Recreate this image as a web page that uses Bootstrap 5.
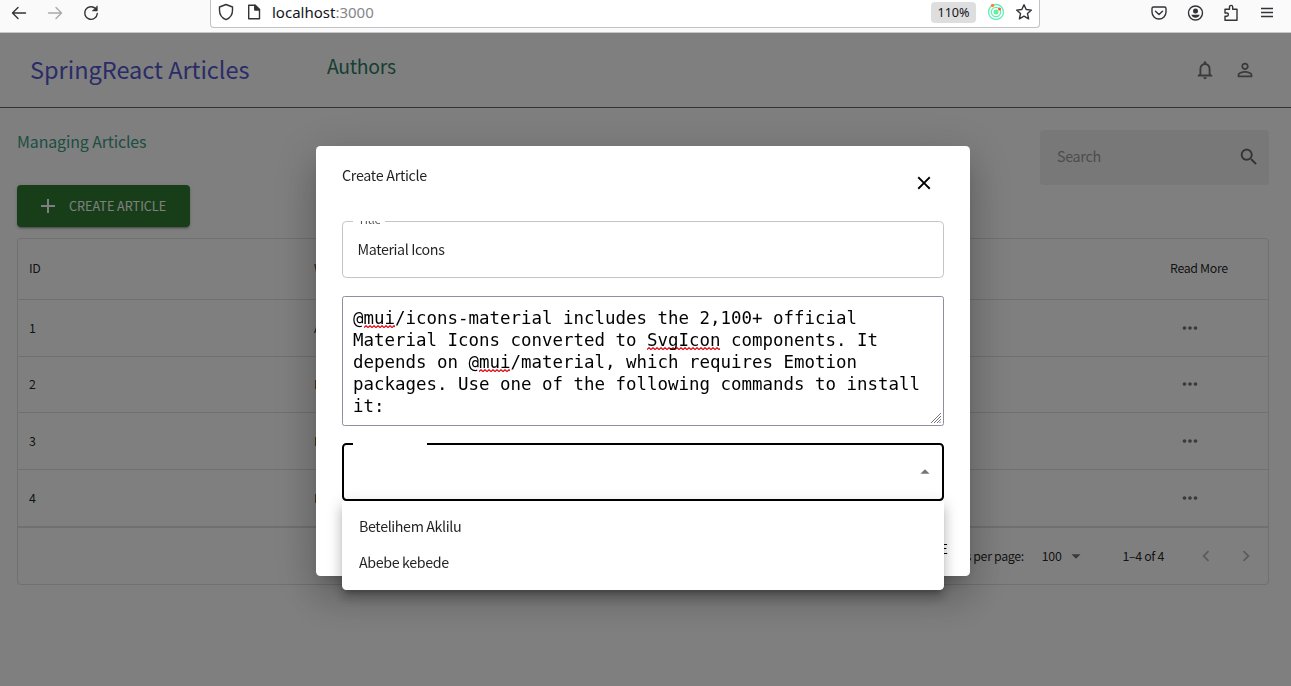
<!DOCTYPE html>
<html lang="en">
<head>
<meta charset="utf-8">
<title>SpringReact Articles</title>
<link href="https://cdn.jsdelivr.net/npm/bootstrap@5.3.0/dist/css/bootstrap.min.css" rel="stylesheet">
<style>
html,body{height:686px;overflow:hidden}
body{font-family:"Noto Sans CJK JP","Noto Sans",sans-serif;color:rgba(0,0,0,.87);line-height:20px;font-size:14.3px}
svg{display:block;flex:none}
.mi{width:22px;height:22px;fill:currentColor}
/* browser toolbar */
.toolbar{height:33px;background:#fafafa;border-bottom:1px solid #c8c8c8;font-family:"Noto Sans",sans-serif;color:#15141a}
.tools{height:25px}
.tools svg{width:18px;height:18px;fill:none;stroke:#333338;stroke-width:1.4;stroke-linecap:round;stroke-linejoin:round}
.left-tools{padding-left:10px;gap:18px;width:210px}
.urlbar{width:830px;height:28px;border:1px solid #c2c2c6;border-top:0;border-radius:0 0 4px 4px;padding:0 6px 3px;background:#fff}
.address{font-size:15px;margin-left:9px}
.address span{color:#85858a}
.zoom-pill{width:45px;height:21px;background:#dedede;border-radius:4px;font-size:12.6px;line-height:21px}
.right-tools{padding-left:110px;gap:18px}
/* application */
.app{height:653px}
.topbar{height:75px;border-bottom:1px solid #686868}
.brand{width:327px;flex:none;padding-left:30px;font-size:23.5px;margin-top:-2px;color:#5558cf}
.authors{font-size:19.4px;letter-spacing:-.3px;color:#2f7d64;margin-top:-8px}
.account{gap:18px;margin-left:auto;margin-right:35px;color:#757575}
.heading{font-size:15.9px;letter-spacing:-.1px;color:#3a9c82;margin:-2px 0 33px}
.main-area{padding:22px 22px 0 17px}
.btn-create{width:173px;height:42px;background:#2e7d32;color:#fff;border-radius:4px;font-size:12.6px;padding:0 0 0 18px;gap:9px;box-shadow:0 3px 1px -2px rgba(0,0,0,.2),0 2px 2px rgba(0,0,0,.14),0 1px 5px rgba(0,0,0,.12)}
.search{width:229px;height:55px;background:rgba(0,0,0,.06);border-radius:4px;padding:0 9px 2px 17px;color:#999;letter-spacing:-.3px}
.search span{margin-top:-2px}
.search .mi{color:#666}
.grid{margin-top:11px;height:347px;border:1px solid #e0e0e0;border-radius:4px;font-size:12.4px;letter-spacing:-.35px}
.grow{height:57px;border-bottom:1px solid #e0e0e0;padding-left:11px}
.grow.head{height:61px;padding-bottom:2px}
.grow.short{height:56px;padding-bottom:1px}
.grow.final{height:58px;border-bottom-width:2px}
.c-id{width:285px}.c-more{width:96px;margin-left:auto;margin-right:2px}
.grow .mi{margin-left:9px;color:#757575}
.pager{height:56px;padding:0 11px 1px 0}
.pager .mi{color:#757575}
.pager .chev{color:#b8b8b8}
/* dialog */
.shade{inset:33px 0 0 0;background:rgba(0,0,0,.5)}
.modal.dlg{inset:33px 0 0 0;height:653px;width:100%;overflow:hidden}
.dlg .modal-dialog{width:654px;max-width:none;margin:113px 0 0 316px}
.dlg .modal-content{height:430px;border:0;border-radius:4.4px;box-shadow:0 11px 15px -7px rgba(0,0,0,.2),0 24px 38px 3px rgba(0,0,0,.14),0 9px 46px 8px rgba(0,0,0,.12);color:rgba(0,0,0,.87);letter-spacing:-.4px}
.dlg .modal-header{height:75px;padding:19px 35px 0 26px;border:0;letter-spacing:-.3px}
.dlg .modal-body{padding:0 26px;overflow:hidden;height:280px;flex:none}
.field{height:57px;border:1px solid #c4c4c4;border-radius:4.4px;padding:0 15px 2px 14.5px}
.notch{position:absolute;background:#fff;top:-2px;left:10px}
.title-notch{width:32px;height:4px;font-size:11.6px}
.title-notch span{position:absolute;left:5px;top:-8.5px;line-height:14px;letter-spacing:-.3px;color:#555}
.note{height:130px;margin-top:18px;border:1px solid #8f8f9d;border-radius:2.5px;padding:10px 10px 0;font:17.44px/22px "DejaVu Sans Mono",monospace;letter-spacing:0;color:#000;white-space:pre}
.typo{background:url("data:image/svg+xml,%3Csvg xmlns='http://www.w3.org/2000/svg' width='4' height='3'%3E%3Cpath d='M-.5 3 2 .7 4.500 3' fill='none' stroke='%23e8000d' stroke-width='1.200'/%3E%3C/svg%3E") repeat-x left bottom}
.grip{position:absolute;right:2px;bottom:2px;width:11px;height:11px;stroke:#777;fill:none}
.choice{height:58px;margin-top:17px;border:2px solid #000;padding:0 6px 1px}
.choice .mi{color:#757575}
.choice .notch{width:74px;height:4px;left:9px}
.dlg .modal-footer{height:75px;border:0;padding:0 22px 0 0}
.submit{font-size:13px;letter-spacing:0;color:#000;margin:20px 0 0}
.options{left:26px;top:355px;width:602px;height:89px;border:0;border-radius:0 0 4.4px 4.4px;padding:7px 0;background:#fff;box-shadow:0 5.5px 5.5px -3px rgba(0,0,0,.2),0 9px 11px 1px rgba(0,0,0,.14),0 3px 15px 2px rgba(0,0,0,.12)}
.options .dropdown-item{height:36px;padding:0 17px;line-height:36px;font-size:14.3px;color:rgba(0,0,0,.87)}
</style>
</head>
<body>
<header class="toolbar d-flex">
  <div class="tools left-tools d-flex align-items-center">
    <svg viewBox="0 0 18 18"><path d="M15.500 9H2.500M8 3.500 2.500 9 8 14.500"/></svg>
    <svg viewBox="0 0 18 18" style="opacity:.4"><path d="M2.500 9h13M10 3.500 15.500 9 10 14.500"/></svg>
    <svg viewBox="0 0 18 18"><path d="M15.300 9.500A6.300 6.300 0 1 1 13.500 4.600"/><path d="M15.300 2.200v4.700h-4.700z" fill="#333338" stroke-width=".6"/></svg>
  </div>
  <div class="urlbar d-flex align-items-center tools">
    <svg viewBox="0 0 18 18"><path d="M9 1.500 15.500 4v3.200c0 4.500-2.500 7.800-6.500 9.500-4-1.700-6.500-5-6.500-9.500V4z"/></svg>
    <svg viewBox="0 0 18 18" style="margin-left:10px"><path d="M3.700 2.200h6.500l4.300 4.300v9.300H3.700zM9.900 2.200v4.600h4.600z" /><path d="M9.900 2.200v4.600h4.600z" fill="#333338"/></svg>
    <div class="address">localhost<span>:3000</span></div>
    <div class="zoom-pill text-center ms-auto">110%</div>
    <svg viewBox="0 0 18 18" style="margin-left:11px"><g stroke="#62edb5" stroke-width="1.300"><circle cx="9" cy="9" r="7.500"/><circle cx="9" cy="9" r="4.600"/></g><circle cx="9" cy="9" r="2.500" fill="#62f09b" stroke="none"/><circle cx="5.500" cy="2.500" r="1.700" fill="#ff8426" stroke="none"/><circle cx="12.500" cy="6" r="1.600" fill="#f26336" stroke="none"/></svg>
    <svg viewBox="0 0 18 18" style="margin-left:10px"><path d="m9 1.700 2.200 4.800 5.200.6-3.900 3.500 1.100 5.200L9 13.200l-4.600 2.600 1.100-5.200-3.900-3.500 5.200-.6z"/></svg>
  </div>
  <div class="tools right-tools d-flex align-items-center">
    <svg viewBox="0 0 18 18"><path d="M3.500 3h11A1.500 1.500 0 0 1 16 4.500V8a7 7 0 0 1-14 0V4.500A1.500 1.500 0 0 1 3.500 3zM5.500 7.300 9 10.500l3.500-3.200"/></svg>
    <svg viewBox="0 0 18 18"><circle cx="9.500" cy="9" r="7"/><circle cx="9.500" cy="7" r="2.500" fill="#333338" stroke="none"/><path d="M5.300 10.800h8.400c-.6 2-2.200 3-4.200 3s-3.600-1-4.200-3z" fill="#333338" stroke="none"/></svg>
    <svg viewBox="0 0 18 18"><path d="M3 7.500V5.300h4.500V3a1.600 1.600 0 0 1 3.200 0v2.300H15v10.900H3v-4h1.800a1.600 1.600 0 0 0 0-3.200H3z"/></svg>
    <svg viewBox="0 0 18 18"><path d="M3 4.500h12M3 8.500h12M3 12.500h12" stroke-linecap="butt"/></svg>
  </div>
</header>

<div class="app">
  <nav class="topbar d-flex align-items-center">
    <div class="brand">SpringReact Articles</div>
    <div class="authors">Authors</div>
    <div class="account d-flex">
      <svg class="mi" viewBox="0 0 24 24"><path d="M12 22c1.100 0 2-.9 2-2h-4c0 1.100.9 2 2 2zm6-6v-5c0-3.070-1.630-5.640-4.500-6.320V4c0-.83-.67-1.500-1.500-1.500s-1.500.67-1.500 1.500v.68C7.640 5.360 6 7.920 6 11v5l-2 2v1h16v-1l-2-2zm-2 1H8v-6c0-2.480 1.510-4.500 4-4.500s4 2.020 4 4.500v6z"/></svg>
      <svg class="mi" viewBox="0 0 24 24"><path d="M12 5.900c1.160 0 2.100.94 2.100 2.100s-.94 2.100-2.100 2.100S9.900 9.160 9.900 8s.94-2.100 2.100-2.100m0 9c2.970 0 6.100 1.460 6.100 2.100v1.100H5.900V17c0-.64 3.130-2.100 6.100-2.100M12 4C9.790 4 8 5.790 8 8s1.790 4 4 4 4-1.790 4-4-1.790-4-4-4zm0 9c-2.670 0-8 1.340-8 4v3h16v-3c0-2.660-5.330-4-8-4z"/></svg>
    </div>
  </nav>
  <main class="main-area">
    <div class="d-flex justify-content-between">
      <div>
        <div class="heading pt-1">Managing Articles</div>
        <button class="btn btn-create d-flex align-items-center">
          <svg style="width:24px;height:24px" viewBox="0 0 24 24" fill="currentColor"><path d="M19 13h-6v6h-2v-6H5v-2h6V5h2v6h6z"/></svg>CREATE ARTICLE</button>
      </div>
      <div class="search d-flex align-items-center justify-content-between"><span>Search</span>
        <svg class="mi" viewBox="0 0 24 24"><path d="M15.500 14h-.79l-.28-.27C15.410 12.590 16 11.110 16 9.500 16 5.910 13.090 3 9.500 3S3 5.910 3 9.500 5.910 16 9.500 16c1.610 0 3.090-.59 4.230-1.570l.27.28v.79l5 4.990L20.490 19l-4.990-5zm-6 0C7.010 14 5 11.990 5 9.500S7.010 5 9.500 5 14 7.010 14 9.500 11.990 14 9.500 14z"/></svg>
      </div>
    </div>
    <div class="grid d-block">
      <div class="grow head d-flex align-items-center"><div class="c-id">ID</div><div>Writer</div><div class="c-more">Read More</div></div>
      <div class="grow d-flex align-items-center"><div class="c-id">1</div><div>Abebe kebede</div><div class="c-more"><svg class="mi" viewBox="0 0 24 24"><path id="dots" d="M6 10c-1.100 0-2 .9-2 2s.9 2 2 2 2-.9 2-2-.9-2-2-2zm12 0c-1.100 0-2 .9-2 2s.9 2 2 2 2-.9 2-2-.9-2-2-2zm-6 0c-1.100 0-2 .9-2 2s.9 2 2 2 2-.9 2-2-.9-2-2-2z"/></svg></div></div>
      <div class="grow short d-flex align-items-center"><div class="c-id">2</div><div>Betelihem Aklilu</div><div class="c-more"><svg class="mi" viewBox="0 0 24 24"><use href="#dots"/></svg></div></div>
      <div class="grow d-flex align-items-center"><div class="c-id">3</div><div>Betelihem Aklilu</div><div class="c-more"><svg class="mi" viewBox="0 0 24 24"><use href="#dots"/></svg></div></div>
      <div class="grow final d-flex align-items-center"><div class="c-id">4</div><div>Betelihem Aklilu</div><div class="c-more"><svg class="mi" viewBox="0 0 24 24"><use href="#dots"/></svg></div></div>
      <div class="pager d-flex align-items-center justify-content-end">
        <div>Rows per page:</div>
        <div style="margin-left:18px">100</div>
        <svg class="mi" style="margin-left:4px" viewBox="0 0 24 24"><path d="m7 10 5 5 5-5z"/></svg>
        <div style="margin-left:35px">1–4 of 4</div>
        <svg class="mi chev" style="margin-left:31px" viewBox="0 0 24 24"><path d="M15.410 7.410 14 6l-6 6 6 6 1.410-1.410L10.830 12z"/></svg>
        <svg class="mi chev" style="margin-left:18px" viewBox="0 0 24 24"><path d="M10 6 8.590 7.410 13.170 12l-4.580 4.590L10 18l6-6z"/></svg>
      </div>
    </div>
  </main>
</div>

<div class="shade position-fixed"></div>
<div class="modal dlg d-block" role="dialog">
  <div class="modal-dialog">
    <div class="modal-content">
      <div class="modal-header d-flex align-items-start justify-content-between">
        <div>Create Article</div>
        <svg class="mi" style="margin-top:7px;color:#000" viewBox="0 0 24 24"><path d="M19 6.410 17.590 5 12 10.590 6.410 5 5 6.410 10.590 12 5 17.590 6.410 19 12 13.410 17.590 19 19 17.590 13.410 12z"/></svg>
      </div>
      <div class="modal-body">
        <div class="field position-relative d-flex align-items-center"><div class="notch title-notch"><span>Title</span></div>Material Icons</div>
        <div class="note position-relative"><span>@<span class="typo">mui</span>/icons-material includes the 2,100+ official
Material Icons converted to <span class="typo">SvgIcon</span> components. It
depends on @<span class="typo">mui</span>/material, which requires Emotion
packages. Use one of the following commands to install
it:</span><svg class="grip" viewBox="0 0 11 11"><path d="M1 11 11 1M4 11l7-7M7 11l4-4M9.500 11 11 9.500"/></svg></div>
        <div class="field choice position-relative d-flex align-items-center justify-content-end"><div class="notch"></div><svg class="mi" viewBox="0 0 24 24"><path d="m7 14 5-5 5 5z"/></svg></div>
      </div>
      <div class="modal-footer d-flex align-items-center justify-content-end"><span class="submit">CREATE</span></div>
      <div class="dropdown-menu options d-block">
        <a class="dropdown-item">Betelihem Aklilu</a>
        <a class="dropdown-item">Abebe kebede</a>
      </div>
    </div>
  </div>
</div>
<script src="https://cdn.jsdelivr.net/npm/bootstrap@5.3.0/dist/js/bootstrap.bundle.min.js"></script>
</body>
</html>
